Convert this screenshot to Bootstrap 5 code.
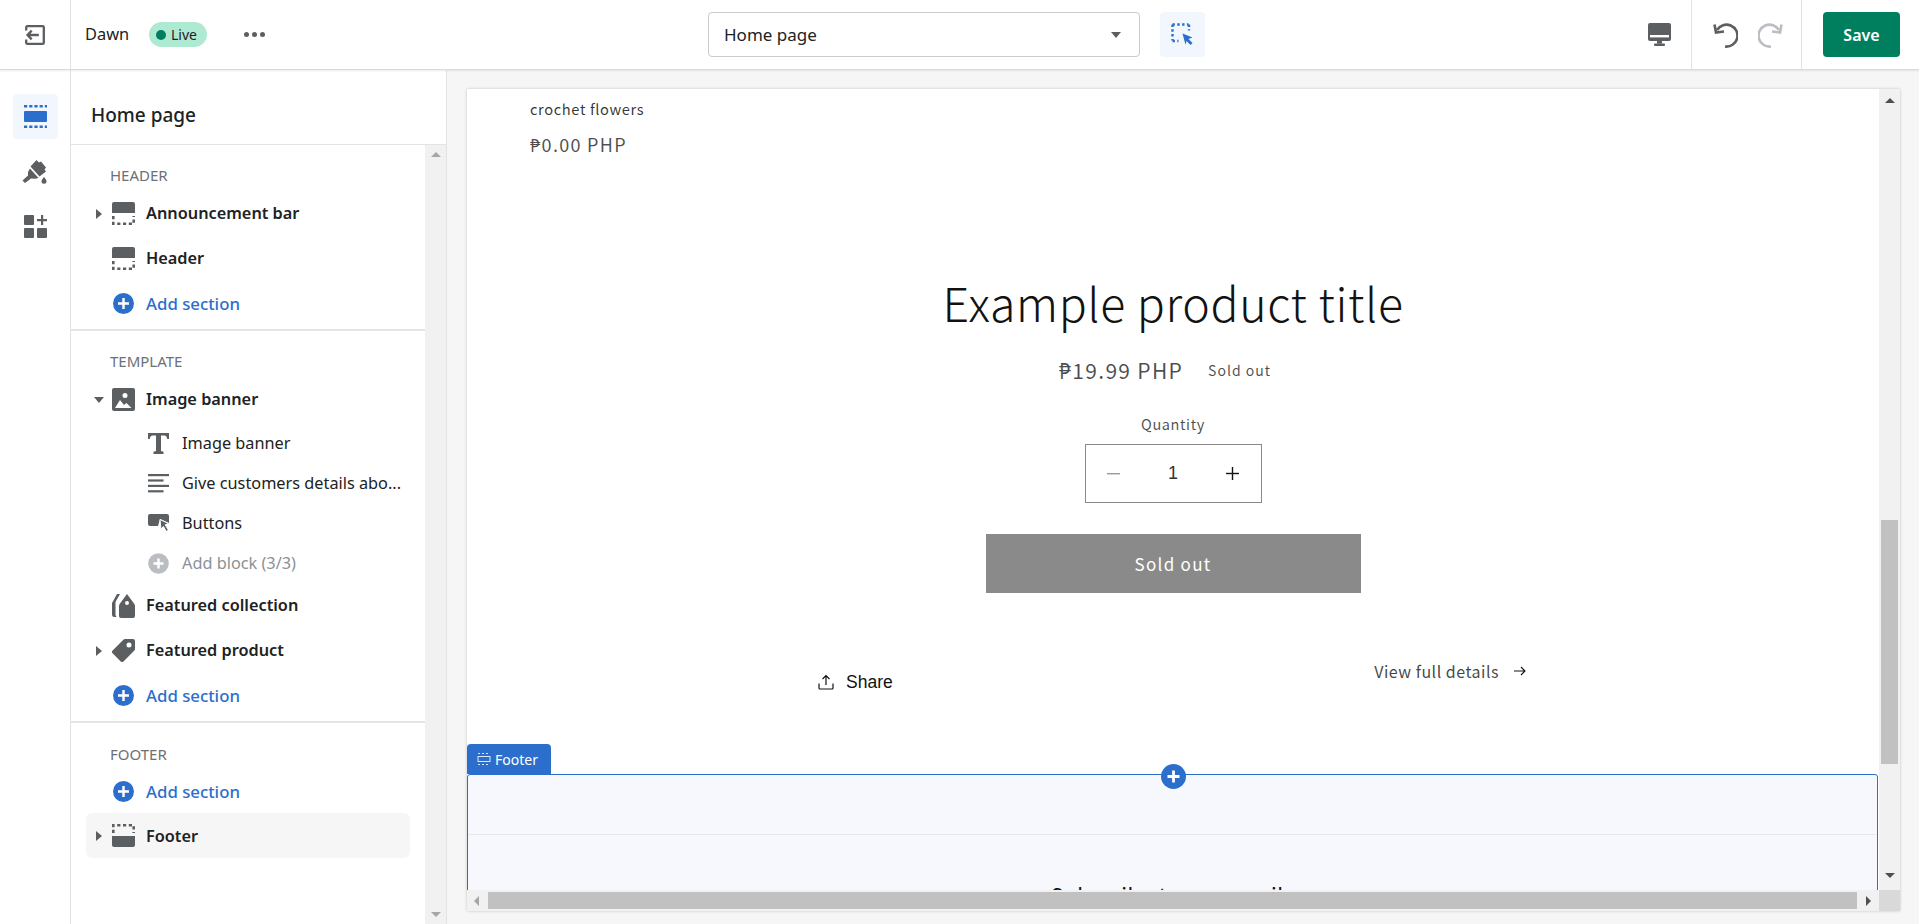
<!DOCTYPE html>
<html lang="en"><head><meta charset="utf-8"><title>Theme editor</title>
<link href="https://cdn.jsdelivr.net/npm/bootstrap@5.3.0/dist/css/bootstrap.min.css" rel="stylesheet">
<style>
html,body{height:100%}
body{font-family:"Noto Sans","Liberation Sans",sans-serif;font-size:15px;color:#202223;background:#f6f6f7;overflow:hidden}
svg{display:block;flex:none}
.ed-top{height:70px;background:#fff;border-bottom:1px solid #d9dadb;box-shadow:0 1px 2px rgba(0,0,0,.08);position:relative;z-index:2;flex:none}
.ed-exit{width:71px;border-right:1px solid #e1e3e5}
.ed-left{width:637px}
.ed-dawn{margin-left:14px;width:64px;font-size:16.400px}
.ed-live{width:58px;height:25px;background:#aee9d1;border-radius:13px;font-size:14px;gap:5px;padding-left:7px}
.ed-dot{width:10px;height:10px;border-radius:50%;background:#007f5f}
.ed-more{margin-left:37px}
.ed-select{width:432px;height:45px;border:1px solid #c9cccf;border-radius:4px;padding:0 18px 0 15px;font-size:17px}
.ed-target{width:45px;height:45px;margin-left:20px;background:#f2f7fe;border-radius:4px}
.ed-right{margin-left:auto;height:100%}
.ed-dev{width:64px;height:100%}
.ed-hist{width:111px;height:100%;border-left:1px solid #e1e3e5;border-right:1px solid #e1e3e5;gap:20px;padding-left:2px}
.ed-save{width:77px;height:45px;margin:0 19px 0 21px;background:#007f5f;color:#fff;border:0;border-radius:4px;font-weight:600;font-size:16px;padding:0}
.ed-save:hover{background:#007f5f;color:#fff}
.ed-rail{width:71px;background:#fff;border-right:1px solid #e1e3e5;padding-top:24px;gap:10px;flex:none}
.ed-rbtn{width:45px;height:45px;border-radius:4px}
.ed-rbtn-on{background:#f2f7fe}
.ed-side{width:376px;background:#fff;border-right:1px solid #e1e3e5;flex:none}
.ed-title{height:75px;border-bottom:1px solid #e1e3e5;padding:16px 0 0 20px;font-size:19px;font-weight:500}
.ed-tree{width:354px;overflow:hidden}
.ed-bar{width:21px;background:#f1f1f1;padding:7px 0}
.ed-sec{border-bottom:2px solid #e4e5e7;padding-top:19px;height:186px}
.ed-sec2{height:392px}
.ed-sec3{border-bottom:0;height:auto;padding-top:20px}
.ed-head{font-size:15px;color:#6d7175;padding-left:39px;line-height:22px;height:22px;text-transform:uppercase;margin-bottom:5px}
.ed-row{height:45px;margin:0 15px;font-size:16.300px;font-weight:600;border-radius:6px;position:relative}
.ed-caret{width:26px;display:flex;justify-content:center;flex:none}
.ed-ico{margin-right:11px}
.ed-add{color:#2c6ecb;font-weight:500;font-size:16.800px}
.ed-add-tight{height:43px}
.ed-child{height:40px;margin-left:77px;font-size:16.300px}
.ed-child svg{margin-right:13px}
.ed-first{margin-top:1px}
.ed-off{color:#8c9196}
.ed-sel{background:#f6f6f7}
.ed-sel-txt{padding-top:2px}
.ed-stage{padding:19px 19px 13px 20px;min-width:0}
.ed-frame{display:grid;grid-template-columns:1fr 21px;grid-template-rows:1fr 21px;background:#fff;box-shadow:0 0 3px rgba(0,0,0,.2);height:100%}
.ed-canvas{position:relative;overflow:hidden;background:#fff;font-family:"Noto Sans CJK SC","Noto Sans",sans-serif;color:#121212;letter-spacing:.6px;min-width:0}
.ed-vbar{background:#f1f1f1;display:flex;flex-direction:column;align-items:center;padding-top:9px}
.ed-vthumb{width:17px;height:244px;background:#c1c1c1;margin-top:417px}
.ed-hbar{background:#f1f1f1;padding:2px 0;min-width:0}
.ed-hthumb{height:17px;width:1369px;background:#c1c1c1;margin-left:9px;flex:none}
.ed-corner{background:#d9d9d9}
.ed-tri{width:0;height:0;border-style:solid;border-color:transparent;flex:none}
.ed-up{border-width:0 5px 5px;border-bottom-color:#a6a6a6}
.ed-dn{border-width:5px 5px 0;border-top-color:#a6a6a6}
.ed-dk.ed-up{border-bottom-color:#505050}.ed-dk.ed-dn{border-top-color:#505050}
.ed-lf{border-width:5px 5px 5px 0;border-right-color:#a6a6a6}
.ed-rt{border-width:5px 0 5px 5px;border-left-color:#505050}
.ed-crt{border-width:5.5px 0 5.5px 6px;border-left-color:#5c5f62}
.ed-crd{border-width:6px 5.5px 0;border-top-color:#5c5f62}
.ed-name{padding:8px 0 0 63px;font-size:14.700px;line-height:24px;color:rgba(18,18,18,.85)}
.ed-p0{padding-left:63px;margin-top:11px;font-size:18px;line-height:24px;color:rgba(18,18,18,.75);letter-spacing:1.300px}
.ed-h{margin:116px 0 0;font-size:46.500px;line-height:60px;font-weight:300;text-align:center;letter-spacing:.6px}
.ed-price{margin-top:25px;height:26px;gap:25px;font-size:21px;line-height:26px;color:rgba(18,18,18,.75);letter-spacing:1.3px;padding-right:16px}
.ed-sold{font-size:14px;letter-spacing:1px;line-height:22px}
.ed-ql{margin-top:31px;text-align:center;font-size:14.500px;line-height:20px;color:rgba(18,18,18,.75)}
.ed-qty{width:177px;height:59px;margin:10px auto 0;border:1px solid #8a8a8a;padding:0 21px;font-family:"Liberation Sans",sans-serif;font-size:18px;color:#333;letter-spacing:0}
.ed-so{width:375px;height:59px;margin:31px auto 0;background:#8a8a8a;color:#fff;border:0;border-radius:0;font-size:17px;letter-spacing:1.3px;font-family:inherit;padding:0}
.ed-so:disabled{background:#8a8a8a;color:#fff;opacity:1}
.ed-links{height:181px}
.ed-share{margin:78px 0 0 351px;height:22px;gap:12px;font-family:"Liberation Sans",sans-serif;font-size:17.500px;letter-spacing:0}
.ed-view{margin:67px 353px 0 auto;height:22px;gap:15px;font-size:16px;color:rgba(18,18,18,.8);letter-spacing:.5px}
.ed-foot{position:relative;height:200px;background:#f6f8fd;border:1px solid #2c6ecb;border-radius:3px 3px 0 0;margin-right:1px}
.ed-line{height:60px;border-bottom:1px solid #e6e7ea}
.ed-sub{text-align:center;font-size:21px;line-height:30px;margin-top:45px;letter-spacing:.6px}
.ed-tag{position:absolute;left:-1px;top:-31px;width:84px;height:30px;background:#2c6ecb;color:#fff;border-radius:4px 4px 0 0;font-family:"Noto Sans",sans-serif;font-size:14px;letter-spacing:0;padding-left:10px;gap:4px}
.ed-plus{position:absolute;left:693px;top:-11px}
</style></head>
<body class="d-flex flex-column">
<header class="ed-top d-flex align-items-stretch">
  <div class="ed-exit d-flex align-items-center justify-content-center">
    <svg width="22" height="22" viewBox="0 0 20 20" fill="none" stroke="#5c5f62" stroke-width="2.100"><path d="M2 6V3a1 1 0 0 1 1-1h14a1 1 0 0 1 1 1v14a1 1 0 0 1-1 1H3a1 1 0 0 1-1-1v-3"/><path d="M13.500 10H3.500M7 6 3.200 10 7 14"/></svg>
  </div>
  <div class="ed-left d-flex align-items-center">
    <span class="ed-dawn">Dawn</span>
    <span class="ed-live d-flex align-items-center"><i class="ed-dot"></i>Live</span>
    <svg class="ed-more" width="21" height="5" viewBox="0 0 21 5" fill="#5c5f62"><circle cx="2.500" cy="2.500" r="2.500"/><circle cx="10.500" cy="2.500" r="2.500"/><circle cx="18.500" cy="2.500" r="2.500"/></svg>
  </div>
  <div class="d-flex align-items-center">
    <div class="ed-select d-flex align-items-center justify-content-between"><span>Home page</span><span class="ed-tri ed-crd"></span></div>
    <div class="ed-target d-flex align-items-center justify-content-center">
      <svg width="23" height="23" viewBox="0 0 23 23" fill="none"><path d="M1.500 1.500h16M1.500 1.500v16M18 1.500v6M1.500 18h6" stroke="#2c6ecb" stroke-width="2.400" stroke-dasharray="2.400 2.400"/><path d="M11.500 10.500l10 4-4 1.500 4 4-2 2-4-4-1 3.800z" fill="#2c6ecb"/></svg>
    </div>
  </div>
  <div class="ed-right d-flex align-items-center">
    <div class="ed-dev d-flex align-items-center justify-content-center">
      <svg width="23" height="23" viewBox="0 0 23 23" fill="#5c5f62"><path d="M2 0h19a2 2 0 0 1 2 2v14a2 2 0 0 1-2 2H2a2 2 0 0 1-2-2V2a2 2 0 0 1 2-2z"/><rect x="2" y="12" width="19" height="2.400" fill="#fff"/><rect x="9" y="18" width="5" height="2.600"/><rect x="6" y="20.400" width="11" height="2.600" rx="1"/></svg>
    </div>
    <div class="ed-hist d-flex align-items-center justify-content-center">
      <svg width="26" height="26" viewBox="0 0 26 26" fill="none" stroke="#5c5f62" stroke-width="2.600"><path d="M5 8A11 11 0 1 1 13 24.500"/><path d="M2.500 2.500 4 10.500l8-1"/></svg>
      <svg width="26" height="26" viewBox="0 0 26 26" fill="none" stroke="#babec3" stroke-width="2.600"><path d="M21 8A11 11 0 1 0 13 24.500"/><path d="M23.500 2.500 22 10.500l-8-1"/></svg>
    </div>
    <button class="btn ed-save" type="button">Save</button>
  </div>
</header>
<div class="d-flex flex-grow-1" style="min-height:0">
  <nav class="ed-rail d-flex flex-column align-items-center">
    <div class="ed-rbtn ed-rbtn-on d-flex align-items-center justify-content-center">
      <svg width="23" height="23" viewBox="0 0 23 23" fill="#2c6ecb"><rect x="0" y="6" width="23" height="11" rx="1"/><path d="M0 1.300h23M0 21.700h23" stroke="#2c6ecb" stroke-width="2.600" stroke-dasharray="3.200 2"/></svg>
    </div>
    <div class="ed-rbtn d-flex align-items-center justify-content-center">
      <svg width="26" height="26" viewBox="0 0 26 26" fill="#5c5f62"><path d="M14.500 1l2.500 2.500 2-1 5 6-1.500 2 1.500 2-6.500 5-9-10z"/><path d="M8 9.500 16.500 19l-3 .8-4.500-.3-6 4.500L.5 21.500 6 16.500V13z"/><path d="M22 18c1.500 2 2.500 3 2.500 4.300a2.500 2.500 0 0 1-5 0c0-1.300 1-2.300 2.500-4.300z"/></svg>
    </div>
    <div class="ed-rbtn d-flex align-items-center justify-content-center">
      <svg width="23" height="23" viewBox="0 0 23 23" fill="#5c5f62"><rect x="0" y="0" width="10" height="10" rx="1"/><rect x="0" y="13" width="10" height="10" rx="1"/><rect x="13" y="13" width="10" height="10" rx="1"/><path d="M17 0h2.200v4H23v2.200h-3.800V10H17V6.200h-4V4h4z"/></svg>
    </div>
  </nav>
  <aside class="ed-side d-flex flex-column">
    <div class="ed-title d-flex align-items-center">Home page</div>
    <div class="d-flex flex-grow-1" style="min-height:0">
      <div class="ed-tree">
        <section class="ed-sec">
          <div class="ed-head">Header</div>
          <div class="ed-row d-flex align-items-center"><span class="ed-caret"><i class="ed-tri ed-crt"></i></span>
            <svg class="ed-ico" width="23" height="23" viewBox="0 0 23 23"><path d="M2 0h19a2 2 0 0 1 2 2v9H0V2a2 2 0 0 1 2-2z" fill="#5c5f62"/><path d="M1.300 14v7.700h20.400V14" fill="none" stroke="#5c5f62" stroke-width="2.600" stroke-dasharray="3.200 2.600"/></svg>Announcement bar</div>
          <div class="ed-row d-flex align-items-center"><span class="ed-caret"></span>
            <svg class="ed-ico" width="23" height="23" viewBox="0 0 23 23"><path d="M2 0h19a2 2 0 0 1 2 2v9H0V2a2 2 0 0 1 2-2z" fill="#5c5f62"/><path d="M1.300 14v7.700h20.400V14" fill="none" stroke="#5c5f62" stroke-width="2.600" stroke-dasharray="3.200 2.600"/></svg>Header</div>
          <div class="ed-row ed-add d-flex align-items-center"><span class="ed-caret"></span>
            <svg class="ed-ico" width="23" height="23" viewBox="0 0 23 23"><circle cx="11.500" cy="11.500" r="10.500" fill="#2c6ecb"/><path d="M11.500 6v11M6 11.500h11" stroke="#fff" stroke-width="2.400"/></svg>Add section</div>
        </section>
        <section class="ed-sec ed-sec2">
          <div class="ed-head">Template</div>
          <div class="ed-row d-flex align-items-center"><span class="ed-caret"><i class="ed-tri ed-crd"></i></span>
            <svg class="ed-ico" width="23" height="23" viewBox="0 0 23 23"><rect width="23" height="23" rx="2" fill="#5c5f62"/><circle cx="13" cy="7.500" r="2.500" fill="#fff"/><path d="M3 20l5-8 4 5 2.500-2 5 5z" fill="#fff"/></svg>Image banner</div>
          <div class="ed-child ed-first d-flex align-items-center fw-normal"><svg width="21" height="21" viewBox="0 0 21 21" fill="#5c5f62"><path d="M0 0h21v6h-1.800c-.3-2-1-3.500-3-3.500h-3.200V18l2.500.8V21H5.500v-2.200L8 18V2.500H4.800c-2 0-2.700 1.500-3 3.500H0z"/></svg>Image banner</div>
          <div class="ed-child d-flex align-items-center fw-normal"><svg width="21" height="19" viewBox="0 0 21 19" fill="#5c5f62"><rect y="0" width="21" height="2.200"/><rect y="5.400" width="15.500" height="2.200"/><rect y="10.800" width="21" height="2.200"/><rect y="16.200" width="15.500" height="2.200"/></svg>Give customers details abo...</div>
          <div class="ed-child d-flex align-items-center fw-normal"><svg width="21" height="18" viewBox="0 0 21 18"><path d="M2 0h17a2 2 0 0 1 2 2v7l-9-4-2 7H2a2 2 0 0 1-2-2V2a2 2 0 0 1 2-2z" fill="#5c5f62"/><path d="M12 5.500l8.500 4-3.300 1.300 3.200 5.200-2 1.500-3-5-2.500 2.500z" fill="#5c5f62" stroke="#fff" stroke-width="1"/></svg>Buttons</div>
          <div class="ed-child ed-off d-flex align-items-center fw-normal"><svg width="21" height="21" viewBox="0 0 21 21"><circle cx="10.500" cy="10.500" r="10.300" fill="#babec3"/><path d="M10.500 5.500v10M5.500 10.500h10" stroke="#fff" stroke-width="2.400"/></svg>Add block (3/3)</div>
          <div class="ed-row d-flex align-items-center"><span class="ed-caret"></span>
            <svg class="ed-ico" width="23" height="25" viewBox="0 0 23 25" fill="#5c5f62"><path d="M5 1h3L3.500 9v13l1 2H2.500A2.500 2.500 0 0 1 0 21.500V10z"/><path d="M15 1l7 9.500c.6.800 1 1.500 1 2.500v10a2 2 0 0 1-2 2H9a2 2 0 0 1-2-2V13c0-1 .4-1.700 1-2.500zm0 7a2 2 0 1 0 0 4 2 2 0 0 0 0-4z" fill-rule="evenodd"/></svg>Featured collection</div>
          <div class="ed-row d-flex align-items-center"><span class="ed-caret"><i class="ed-tri ed-crt"></i></span>
            <svg class="ed-ico" width="23" height="23" viewBox="0 0 23 23" fill="#5c5f62"><path d="M13 0h8a2 2 0 0 1 2 2v8c0 .6-.2 1-.6 1.400L11.500 22.400a2 2 0 0 1-2.800 0L.6 14.300a2 2 0 0 1 0-2.800L11.600.6C12 .2 12.400 0 13 0zm4 3.500a2.500 2.500 0 1 0 0 5 2.500 2.500 0 0 0 0-5z" fill-rule="evenodd"/></svg>Featured product</div>
          <div class="ed-row ed-add d-flex align-items-center"><span class="ed-caret"></span>
            <svg class="ed-ico" width="23" height="23" viewBox="0 0 23 23"><circle cx="11.500" cy="11.500" r="10.500" fill="#2c6ecb"/><path d="M11.500 6v11M6 11.500h11" stroke="#fff" stroke-width="2.400"/></svg>Add section</div>
        </section>
        <section class="ed-sec3">
          <div class="ed-head">Footer</div>
          <div class="ed-row ed-add ed-add-tight d-flex align-items-center"><span class="ed-caret"></span>
            <svg class="ed-ico" width="23" height="23" viewBox="0 0 23 23"><circle cx="11.500" cy="11.500" r="10.500" fill="#2c6ecb"/><path d="M11.500 6v11M6 11.500h11" stroke="#fff" stroke-width="2.400"/></svg>Add section</div>
          <div class="ed-row ed-sel d-flex align-items-center"><span class="ed-caret"><i class="ed-tri ed-crt"></i></span>
            <svg class="ed-ico" width="23" height="23" viewBox="0 0 23 23"><path d="M0 12h23v9a2 2 0 0 1-2 2H2a2 2 0 0 1-2-2z" fill="#5c5f62"/><path d="M1.300 9V1.300h20.400V9" fill="none" stroke="#5c5f62" stroke-width="2.600" stroke-dasharray="3.200 2.600"/></svg><span class="fw-semibold ed-sel-txt">Footer</span></div>
        </section>
      </div>
      <div class="ed-bar d-flex flex-column align-items-center justify-content-between"><i class="ed-tri ed-up"></i><i class="ed-tri ed-dn"></i></div>
    </div>
  </aside>
  <main class="ed-stage flex-grow-1">
    <div class="ed-frame">
      <div class="ed-canvas">
        <div class="ed-name">crochet flowers</div>
        <div class="ed-p0">₱0.00 PHP</div>
        <h1 class="ed-h">Example product title</h1>
        <div class="ed-price d-flex justify-content-center align-items-center"><span>₱19.99 PHP</span><span class="ed-sold">Sold out</span></div>
        <div class="ed-ql">Quantity</div>
        <div class="ed-qty d-flex align-items-center justify-content-between">
          <svg width="13" height="2" viewBox="0 0 13 2"><rect width="13" height="1.400" fill="#999"/></svg><span>1</span>
          <svg width="13" height="13" viewBox="0 0 13 13" fill="#121212"><rect y="5.800" width="13" height="1.400"/><rect x="5.800" width="1.400" height="13"/></svg>
        </div>
        <button class="btn ed-so d-block" type="button" disabled>Sold out</button>
        <div class="ed-links d-flex align-items-start">
          <div class="ed-share d-flex align-items-center"><svg width="16" height="16" viewBox="0 0 16 16" fill="none" stroke="#121212" stroke-width="1.200"><path d="M1 9.500V14a1 1 0 0 0 1 1h12a1 1 0 0 0 1-1V9.500M8 11V1.500M4.500 5 8 1.500 11.500 5"/></svg><span>Share</span></div>
          <div class="ed-view d-flex align-items-center"><span>View full details</span><svg width="12" height="10" viewBox="0 0 12 10" fill="none" stroke="#121212" stroke-width="1.100"><path d="M0 5h11M7 1l4 4-4 4"/></svg></div>
        </div>
        <section class="ed-foot">
          <div class="ed-tag d-flex align-items-center"><svg width="14" height="14" viewBox="0 0 14 14" fill="none" stroke="#dbe6f7" stroke-width="1"><rect x="1" y="4.500" width="12" height="5"/><path d="M1 1.500h12M1 12.500h12" stroke-dasharray="2 2"/></svg>Footer</div>
          <svg class="ed-plus" width="25" height="25" viewBox="0 0 25 25"><circle cx="12.500" cy="12.500" r="12.500" fill="#2c6ecb"/><path d="M12.500 6.500v12M6.500 12.500h12" stroke="#fff" stroke-width="2.800"/></svg>
          <div class="ed-line"></div>
          <div class="ed-sub">Subscribe to our emails</div>
        </section>
      </div>
      <div class="ed-vbar"><i class="ed-tri ed-up ed-dk"></i><div class="ed-vthumb"></div><i class="ed-tri ed-dn ed-dk" style="margin-top:auto;margin-bottom:12px"></i></div>
      <div class="ed-hbar d-flex align-items-center"><i class="ed-tri ed-lf" style="margin-left:7px"></i><div class="ed-hthumb"></div><i class="ed-tri ed-rt" style="margin-left:9px"></i></div>
      <div class="ed-corner"></div>
    </div>
  </main>
</div>
<script src="https://cdn.jsdelivr.net/npm/bootstrap@5.3.0/dist/js/bootstrap.bundle.min.js"></script>
</body></html>
